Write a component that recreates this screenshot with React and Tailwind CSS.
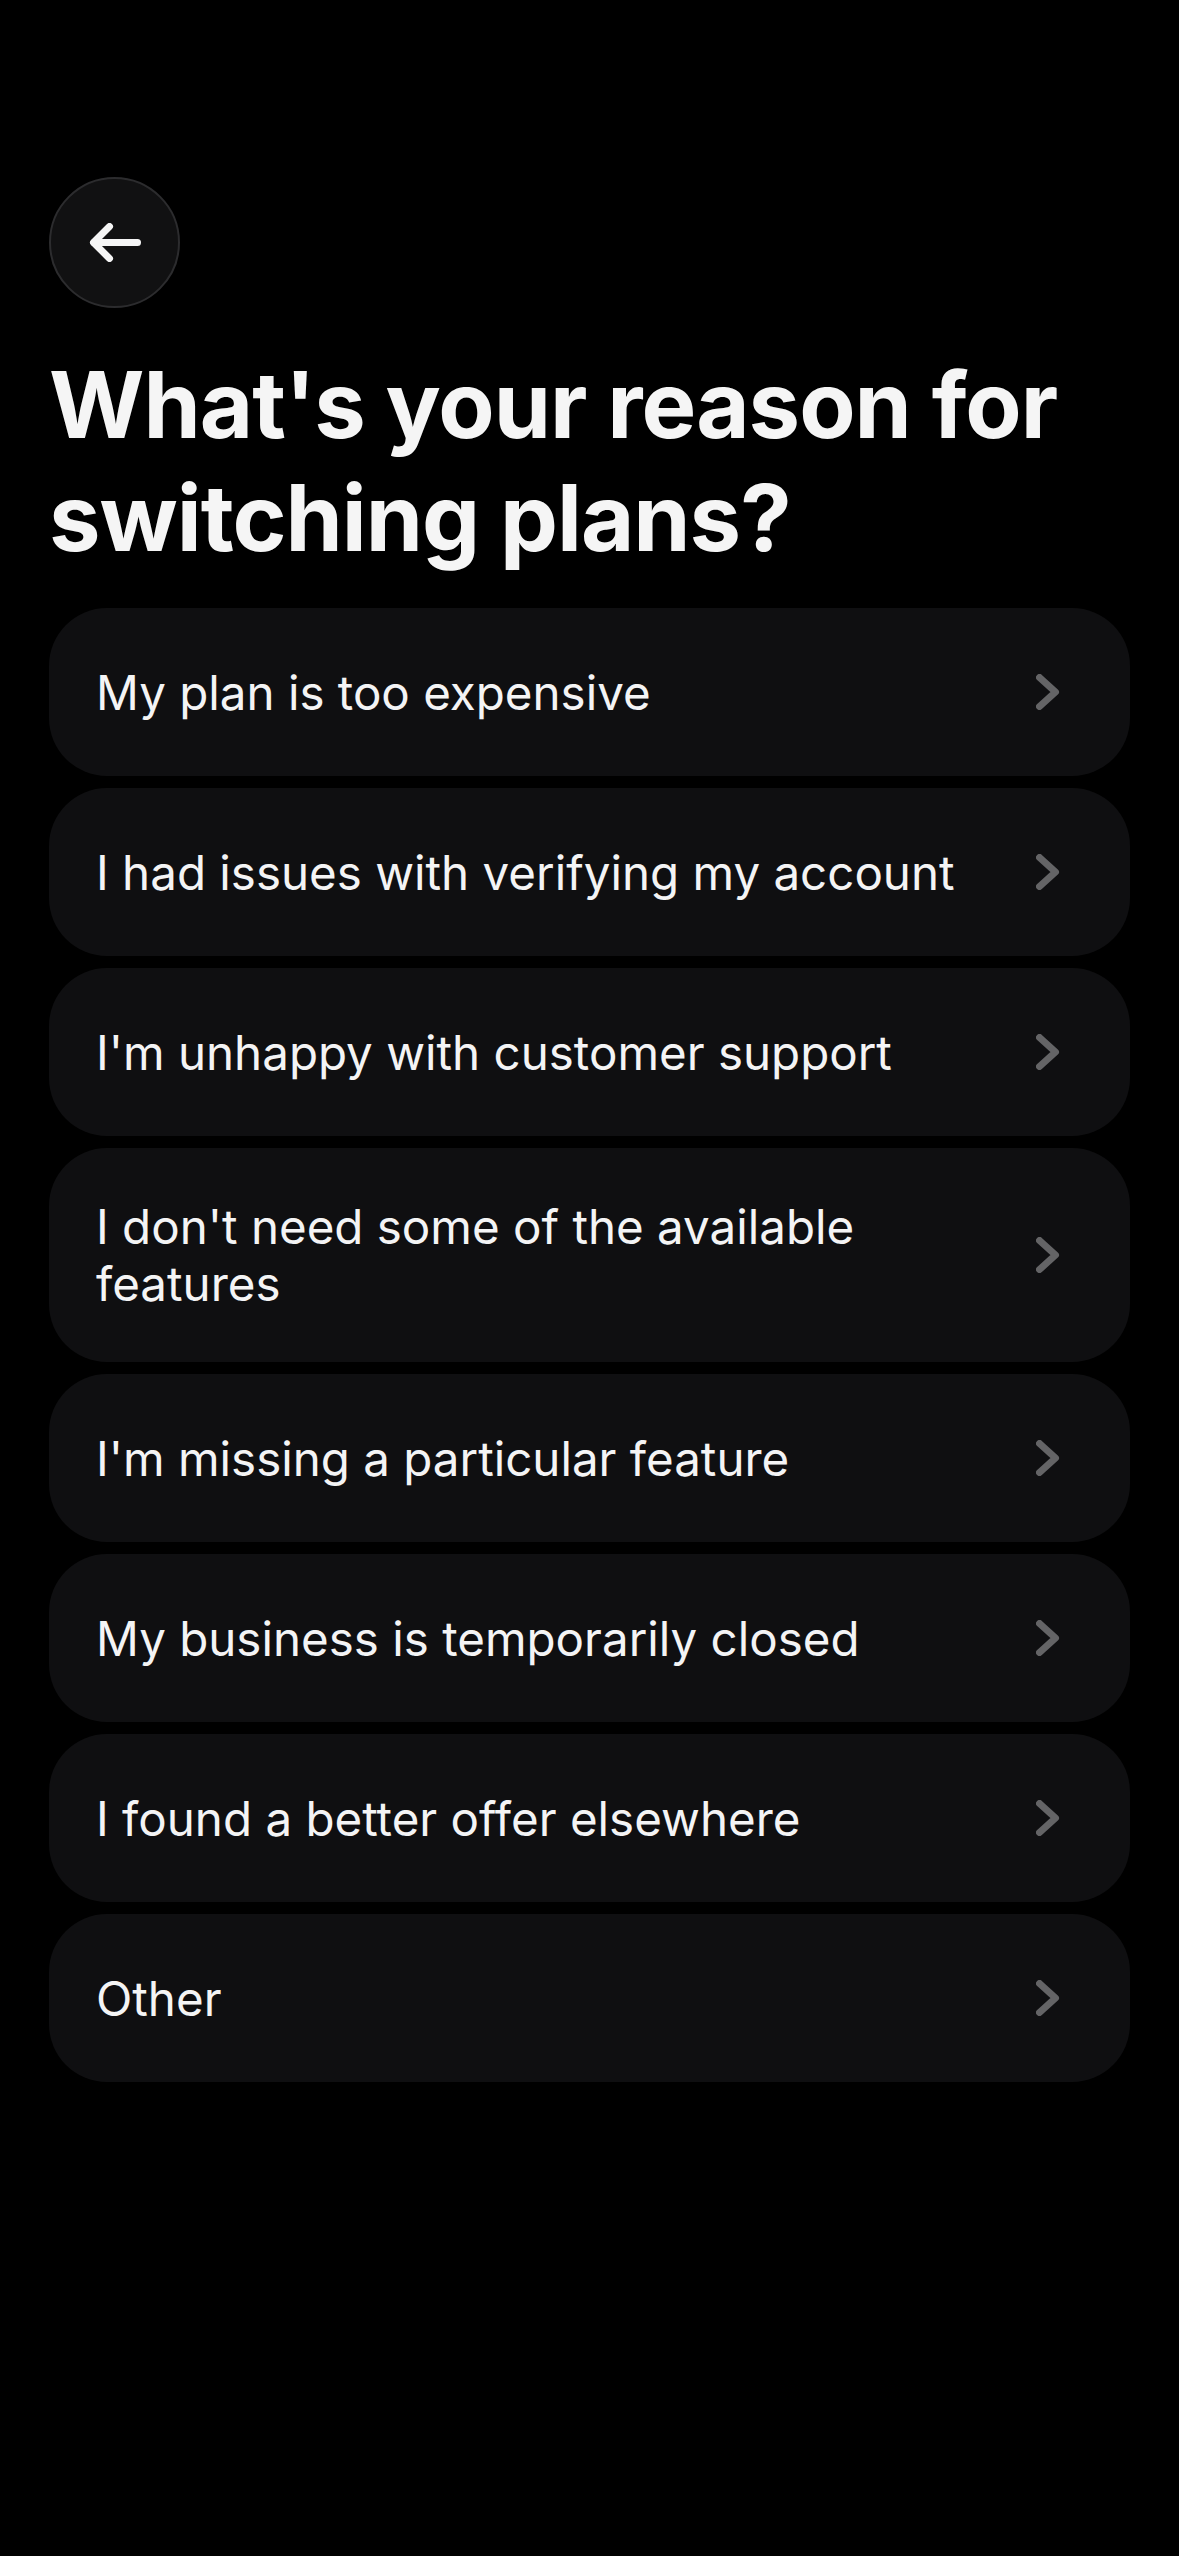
import React from 'react';

const reasons = [
    'My plan is too expensive',
    'I had issues with verifying my account',
    "I'm unhappy with customer support",
    "I don't need some of the available features",
    "I'm missing a particular feature",
    'My business is temporarily closed',
    'I found a better offer elsewhere',
    'Other',
];

const BackArrow = () => (
    <svg width="52" height="39" viewBox="0 0 52 39" fill="none" stroke="#f5f5f5" strokeWidth="7" strokeLinecap="round" strokeLinejoin="round">
        <path d="M48.5 19.5H5" />
        <path d="M20.5 3.5L4.5 19.5L20.5 35.5" />
    </svg>
);

const Chevron = () => (
    <svg width="24" height="36" viewBox="0 0 24 36" fill="none" stroke="#646466" strokeWidth="7" strokeLinecap="round" strokeLinejoin="round">
        <path d="M3.5 3.5L19.5 18L3.5 32.5" />
    </svg>
);

const ReasonRow = ({ label }) => (
    <button className="flex w-full min-h-[168px] items-center justify-between gap-10 rounded-[58px] bg-[#0f0f11] py-[50px] pl-[47px] pr-[70px] text-left">
        <span className="text-[47.5px] leading-[57px] font-normal text-[#f4f4f5]">{label}</span>
        <span className="shrink-0">
            <Chevron />
        </span>
    </button>
);

export default function App() {
    return (
        <div
            className="min-h-[2556px] w-full bg-black px-[49px] pt-[177px]"
            style={{ fontFamily: 'Inter, "Noto Sans", "Liberation Sans", sans-serif' }}
        >
            <button className="flex h-[131px] w-[131px] items-center justify-center rounded-full border-2 border-[#2c2c2e] bg-[#111112]">
                <BackArrow />
            </button>

            <h1 className="mt-[40px] text-[92px] leading-[113px] font-bold tracking-[-1px] text-[#f5f5f5]">
                What's your reason for switching plans?
            </h1>

            <div className="mt-[34px] flex flex-col gap-[12px]">
                {reasons.map((r) => (
                    <ReasonRow key={r} label={r} />
                ))}
            </div>
        </div>
    );
}
